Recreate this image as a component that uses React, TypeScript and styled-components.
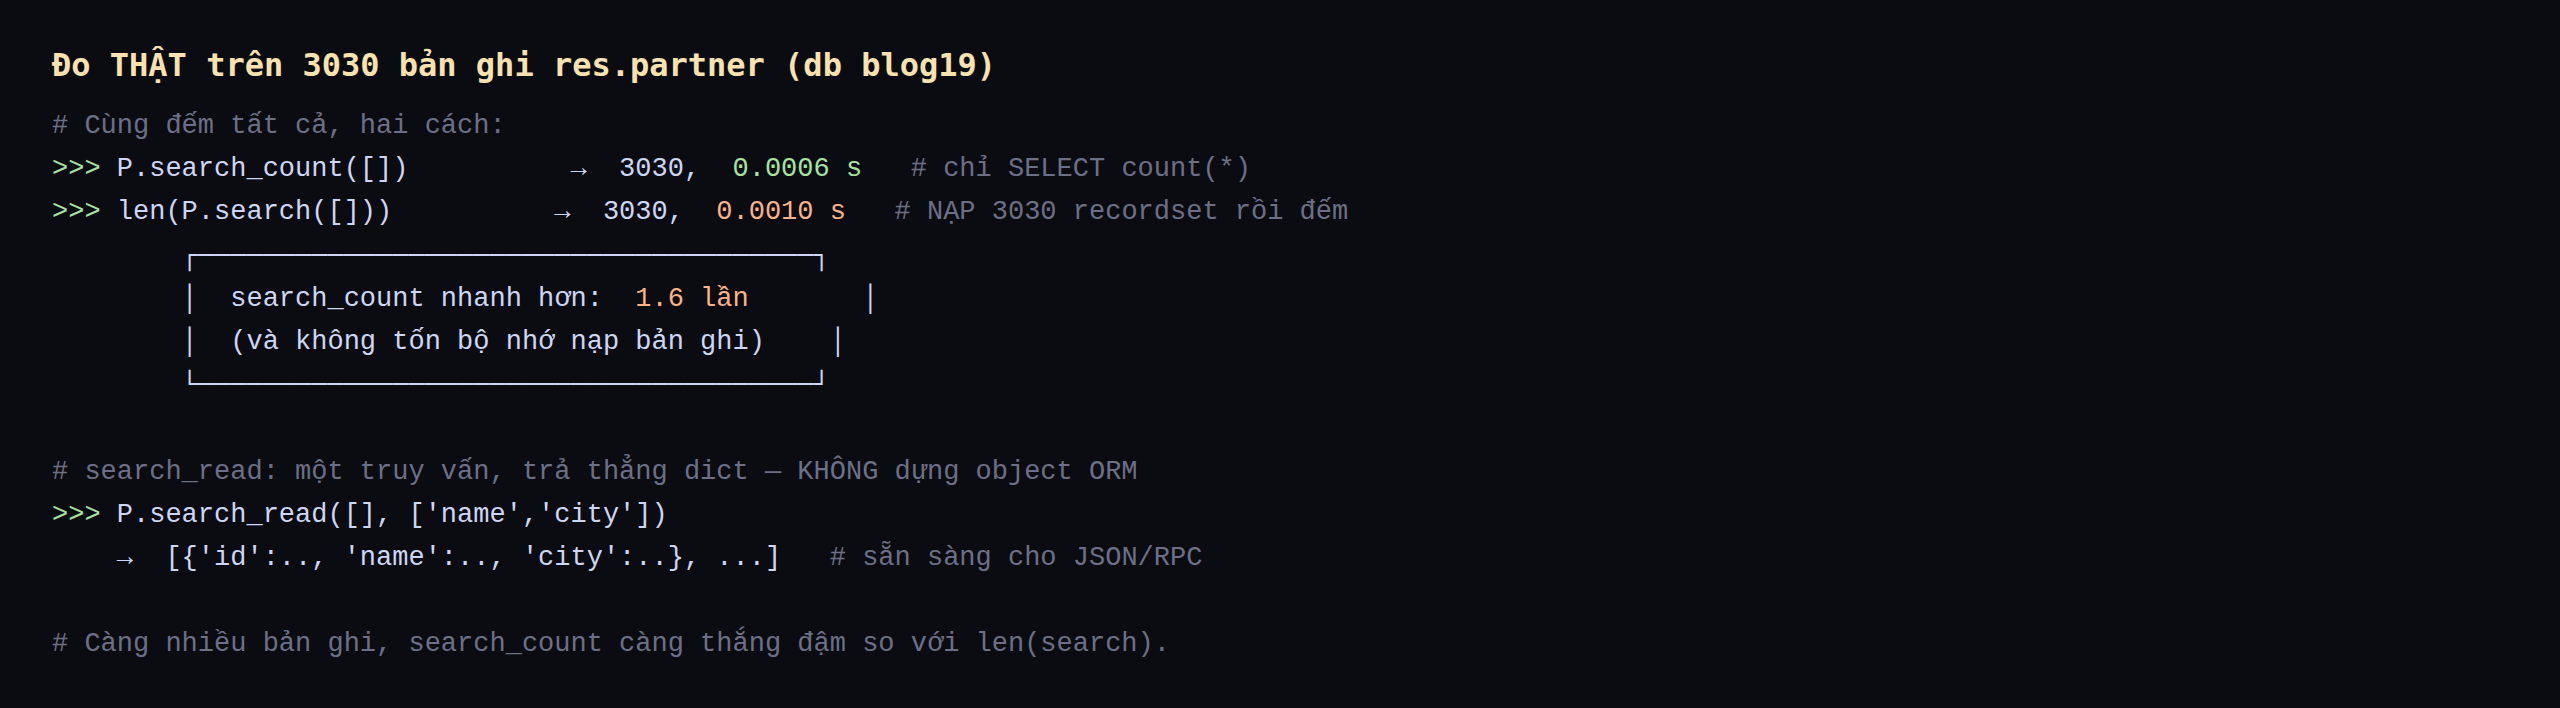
import React from "react";
import styled, { createGlobalStyle } from "styled-components";

const Global = createGlobalStyle`
  html, body {
    margin: 0;
    padding: 0;
    background: #0b0c11;
  }
  #root {
    min-height: 708px;
    background: #0b0c11;
  }
`;

const Page = styled.main`
  display: flex;
  flex-direction: column;
  padding: 46px 52px 0 52px;
  min-height: 708px;
  box-sizing: border-box;
  background: #0b0c11;
`;

const Title = styled.h1`
  margin: 0 0 21px 0;
  font-family: "DejaVu Sans Mono", monospace;
  font-weight: 700;
  font-size: 32px;
  line-height: 38px;
  color: #f9e2af;
  white-space: pre;
`;

const Code = styled.pre`
  margin: 0;
  font-family: "Liberation Mono", "DejaVu Sans Mono", monospace;
  font-size: 27px;
  line-height: 43.2px;
  color: #cdd6f4;
  white-space: pre;
`;

const Line = styled.div`
  height: 43.2px;
`;

type Tone = "comment" | "prompt" | "good" | "warn" | "plain";

const toneColor: Record<Tone, string> = {
  comment: "#6c7086",
  prompt: "#a6e3a1",
  good: "#a6e3a1",
  warn: "#fab387",
  plain: "#cdd6f4",
};

const Tok = styled.span<{ $tone: Tone }>`
  color: ${(p) => toneColor[p.$tone]};
`;

const dash = "─".repeat(38);

export default function App() {
  return (
    <>
      <Global />
      <Page>
        <Title>Đo THẬT trên 3030 bản ghi res.partner (db blog19)</Title>
        <Code>
          <Line>
            <Tok $tone="comment"># Cùng đếm tất cả, hai cách:</Tok>
          </Line>
          <Line>
            <Tok $tone="prompt">&gt;&gt;&gt; </Tok>
            <Tok $tone="plain">P.search_count([])          →  3030,  </Tok>
            <Tok $tone="good">0.0006 s</Tok>
            <Tok $tone="comment">   # chỉ SELECT count(*)</Tok>
          </Line>
          <Line>
            <Tok $tone="prompt">&gt;&gt;&gt; </Tok>
            <Tok $tone="plain">len(P.search([]))          →  3030,  </Tok>
            <Tok $tone="warn">0.0010 s</Tok>
            <Tok $tone="comment">   # NẠP 3030 recordset rồi đếm</Tok>
          </Line>
          <Line>
            <Tok $tone="plain">{"        ┌" + dash + "┐"}</Tok>
          </Line>
          <Line>
            <Tok $tone="plain">{"        │  search_count nhanh hơn:  "}</Tok>
            <Tok $tone="warn">1.6 lần</Tok>
            <Tok $tone="plain">{"       │"}</Tok>
          </Line>
          <Line>
            <Tok $tone="plain">{"        │  (và không tốn bộ nhớ nạp bản ghi)    │"}</Tok>
          </Line>
          <Line>
            <Tok $tone="plain">{"        └" + dash + "┘"}</Tok>
          </Line>
          <Line />
          <Line>
            <Tok $tone="comment"># search_read: một truy vấn, trả thẳng dict — KHÔNG dựng object ORM</Tok>
          </Line>
          <Line>
            <Tok $tone="prompt">&gt;&gt;&gt; </Tok>
            <Tok $tone="plain">P.search_read([], ['name','city'])</Tok>
          </Line>
          <Line>
            <Tok $tone="plain">{"    →  [{'id':.., 'name':.., 'city':..}, ...]"}</Tok>
            <Tok $tone="comment">   # sẵn sàng cho JSON/RPC</Tok>
          </Line>
          <Line />
          <Line>
            <Tok $tone="comment"># Càng nhiều bản ghi, search_count càng thắng đậm so với len(search).</Tok>
          </Line>
        </Code>
      </Page>
    </>
  );
}
